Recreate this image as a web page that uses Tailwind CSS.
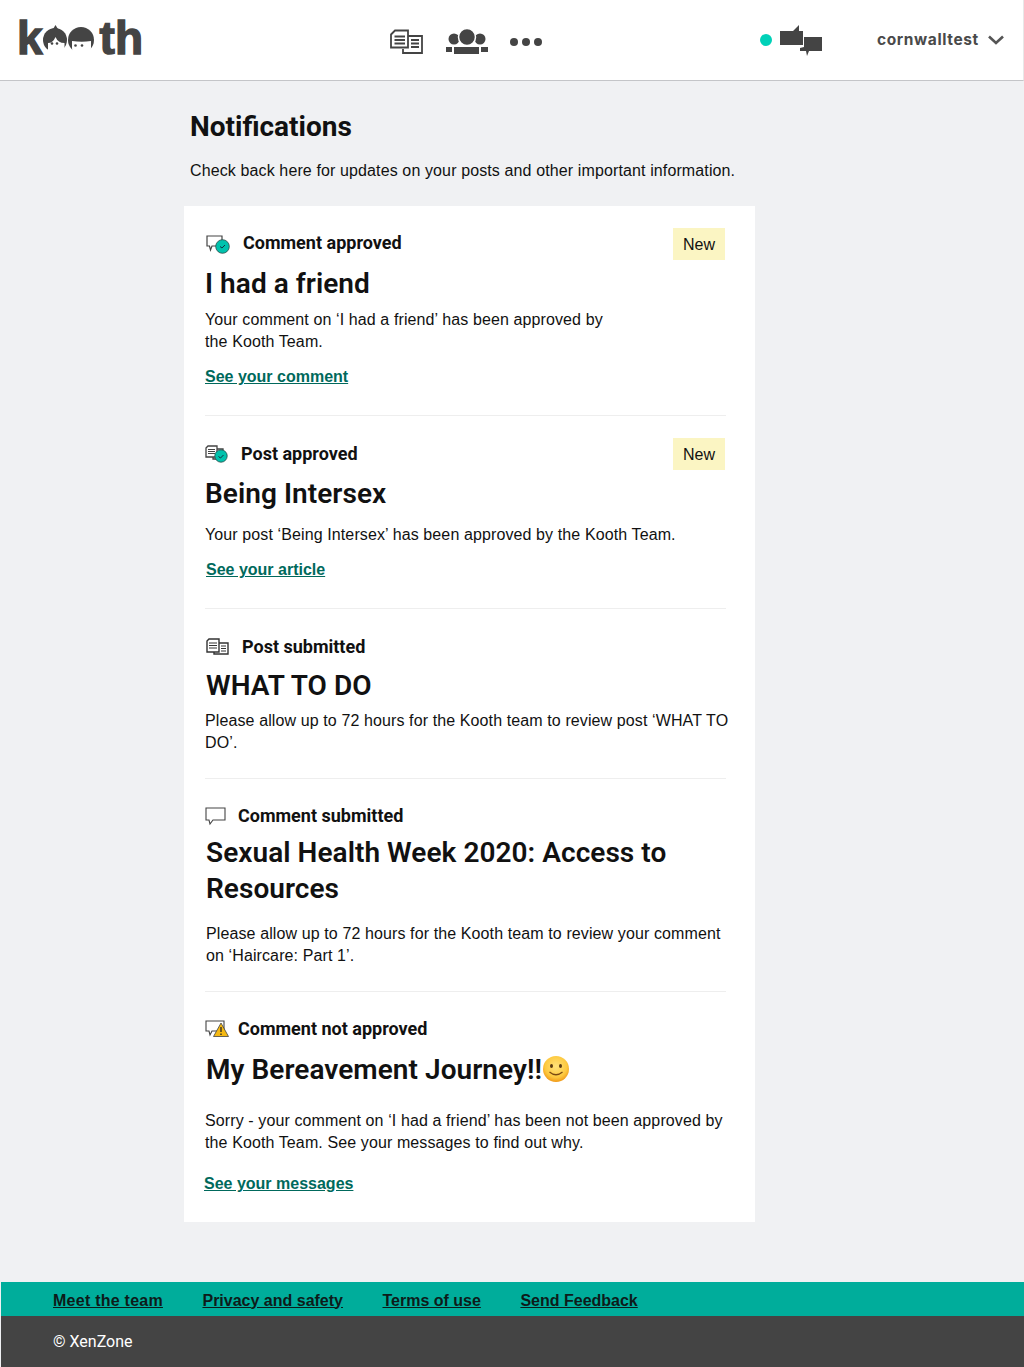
<!DOCTYPE html>
<html lang="en">
<head>
  <meta charset="UTF-8">
  <title>Kooth - Notifications</title>
  <script src="https://cdn.jsdelivr.net/npm/@tailwindcss/browser@4"></script>
</head>
<body class="bg-white font-['Liberation_Sans',sans-serif] text-[#111]">
<div class="min-h-[1367px] flex flex-col bg-[#f0f1f3]">

  <!-- Header -->
  <header class="relative h-[81px] bg-white border-b border-[#c4c5c8] border-r border-r-[#e8e8e8] flex items-center">
    <div class="ml-[17px] self-start mt-[15px] flex items-start font-bold text-[46px] leading-none text-[#444] [-webkit-text-stroke:1.400px_#444]">
      <span>k</span>
      <svg width="52" height="38" viewBox="0 0 52 38" class="shrink-0 ml-[0px] mt-[9px] mr-[5px]">
        <circle cx="12" cy="16" r="12" fill="#444"/>
        <path d="M5 28v-9q5 0 7.500-6q2.500 6 9 6v9z" fill="#fff"/>
        <path d="M12.500 1l3 5h-6z" fill="#444"/>
        <circle cx="9" cy="19.500" r="1.300" fill="#444"/><circle cx="14" cy="19.500" r="1.300" fill="#444"/>
        <circle cx="38" cy="16" r="13" fill="#444"/>
        <path d="M29 17q10 1.500 19 0v7q0 7-8 7h-2l-2.500 7-1.500-7q-5 0-5-7z" fill="#fff"/>
        <circle cx="32.500" cy="21.500" r="1.300" fill="#444"/><circle cx="39" cy="21.500" r="1.300" fill="#444"/>
      </svg>
      <span>th</span>
    </div>

    <!-- Nav icons -->
    <nav class="absolute left-[390px] top-[28px] flex items-center">
      <svg width="34" height="26" viewBox="0 0 34 26" class="text-[#444]">
        <path d="M1 5.500l4-4h13v17H1z M18 7h14v17H13v-4" fill="none" stroke="currentColor" stroke-width="1.800"/>
        <path d="M4.500 7.500h10.500M4.500 11h10.500M4.500 14.500h10.500M21 11h8M21 14.500h8M21 18h8" stroke="currentColor" stroke-width="2"/>
      </svg>
      <svg width="44" height="27" viewBox="0 0 44 27" class="ml-[21px] text-[#444]">
        <circle cx="9" cy="11" r="5.500" fill="currentColor"/>
        <circle cx="35" cy="11" r="5.500" fill="currentColor"/>
        <circle cx="22" cy="9" r="8.500" fill="currentColor" stroke="#fff" stroke-width="1.500"/>
        <path d="M1 19h6v5H1zM9 19h25v7H9zM36 19h7v5h-7z" fill="currentColor"/>
      </svg>
      <div class="ml-[21px] flex gap-[4px]">
        <span class="w-[8px] h-[8px] rounded-full bg-[#444]"></span>
        <span class="w-[8px] h-[8px] rounded-full bg-[#444]"></span>
        <span class="w-[8px] h-[8px] rounded-full bg-[#444]"></span>
      </div>
    </nav>

    <!-- Messages and user -->
    <div class="absolute left-[760px] top-[24px] flex items-center">
      <span class="w-[12px] h-[12px] rounded-full bg-[#00d1b8] mt-[-1px]"></span>
      <svg width="44" height="33" viewBox="0 0 44 33" class="ml-[8px]">
        <path d="M0 7h13l6-6v6h4v14H0zM24 13h18v14H29l-2 5-1-5h-6v-3l4-1z" fill="#444"/>
      </svg>
      <span class="ml-[53px] font-['Inter',sans-serif] font-bold text-[15.500px] tracking-[.6px] text-[#4a4a4a] mt-[-1px]">cornwalltest</span>
      <svg width="16" height="10" viewBox="0 0 16 10" class="ml-[9px] mt-[-2px]">
        <path d="M1 1.500L8 8l7-6.500" fill="none" stroke="#555" stroke-width="2.600"/>
      </svg>
    </div>
  </header>

  <!-- Content -->
  <main class="ml-[184px] w-[571px] flex-1">
    <h1 class="ml-[6px] mt-[28px] text-[28px] leading-[36px] font-bold font-['Roboto',sans-serif]">Notifications</h1>
    <p class="ml-[6px] mt-[15px] text-[16px] leading-[22px] tracking-[.12px]">Check back here for updates on your posts and other important information.</p>

    <section class="mt-[24px] bg-white text-[16px] leading-[22px] tracking-[.11px] px-[20px] pt-[22px] pb-[28px] h-[1016px]">

      <!-- Comment approved -->
      <article class="relative h-[188px] border-b border-[#eeeeee] ml-[1px] w-[521px]">
        <div class="flex items-center h-[30px]">
          <svg width="25" height="20" viewBox="0 0 25 20" class="ml-[1px] mt-[2px]">
            <path d="M1 2h15v10H6l-1.500 4-1-4H1z" fill="#fff" stroke="#444" stroke-width="1.200"/>
            <circle cx="16.500" cy="12.500" r="6.800" fill="#00c2ad" stroke="#2b4a48" stroke-width=".8"/>
            <path d="M14 12.500l2 1.500 3-3" fill="none" stroke="#134" stroke-width="1"/>
          </svg>
          <h3 class="ml-[12px] text-[18px] tracking-normal font-bold font-['Roboto',sans-serif]">Comment approved</h3>
        </div>
        <span class="absolute right-[1px] top-0 w-[52px] h-[32px] pt-[1px] bg-[#fbf5c3] flex items-center justify-center text-[16px] tracking-normal">New</span>
        <h2 class="mt-[8px] text-[28px] leading-[36px] tracking-[.05px] font-semibold font-['Roboto',sans-serif]">I had a friend</h2>
        <p class="mt-[7px] w-[410px]">Your comment on ‘I had a friend’ has been approved by the Kooth Team.</p>
        <a class="block mt-[13px] font-bold tracking-normal text-[#00695c] underline">See your comment</a>
      </article>

      <!-- Post approved -->
      <article class="relative h-[193px] border-b border-[#eeeeee] ml-[1px] w-[521px] pt-[23px]">
        <div class="flex items-center h-[30px]">
          <svg width="24" height="18" viewBox="0 0 24 18">
            <path d="M1 3l2-2h9v11H1zM12 4h6v10H8v-2" fill="none" stroke="#444" stroke-width="1.300"/>
            <path d="M3 4.500h7M3 6.500h7M3 8.500h7" stroke="#444"/>
            <circle cx="16" cy="11" r="6.200" fill="#00c2ad" stroke="#2b4a48" stroke-width=".8"/>
            <path d="M13.500 11.500l2 1.500 3-3" fill="none" stroke="#134" stroke-width="1"/>
          </svg>
          <h3 class="ml-[12px] text-[18px] tracking-normal font-bold font-['Roboto',sans-serif]">Post approved</h3>
        </div>
        <span class="absolute right-[1px] top-[22px] w-[52px] h-[32px] pt-[1px] bg-[#fbf5c3] flex items-center justify-center text-[16px] tracking-normal">New</span>
        <h2 class="mt-[7px] text-[28px] leading-[36px] tracking-[.05px] font-semibold font-['Roboto',sans-serif]">Being Intersex</h2>
        <p class="mt-[12px]">Your post ‘Being Intersex’ has been approved by the Kooth Team.</p>
        <a class="block mt-[13px] ml-[1px] font-bold tracking-normal text-[#00695c] underline">See your article</a>
      </article>

      <!-- Post submitted -->
      <article class="h-[170px] border-b border-[#eeeeee] ml-[1px] w-[521px] pt-[23px]">
        <div class="flex items-center h-[30px]">
          <svg width="24" height="18" viewBox="0 0 24 18" class="ml-[1px]">
            <path d="M1 3l2-2h10v13H1zM13 5h9v11H8v-2" fill="none" stroke="#333" stroke-width="1.400"/>
            <path d="M3 5h8M3 7.500h8M3 10h8M15 8h5M15 10.500h5M15 13h5" stroke="#333"/>
          </svg>
          <h3 class="ml-[12px] text-[18px] tracking-normal font-bold font-['Roboto',sans-serif]">Post submitted</h3>
        </div>
        <h2 class="mt-[6px] ml-[1px] text-[28px] leading-[36px] tracking-[.05px] font-semibold font-['Roboto',sans-serif]">WHAT TO DO</h2>
        <p class="mt-[6px] w-[530px]">Please allow up to 72 hours for the Kooth team to review post ‘WHAT TO DO’.</p>
      </article>

      <!-- Comment submitted -->
      <article class="h-[213px] border-b border-[#eeeeee] ml-[1px] w-[521px] pt-[22px]">
        <div class="flex items-center h-[30px]">
          <svg width="22" height="20" viewBox="0 0 22 20">
            <path d="M1 2h19v12H8l-3 4-1-4H1z" fill="#fff" stroke="#444" stroke-width="1.100"/>
          </svg>
          <h3 class="ml-[11px] text-[18px] tracking-normal font-bold font-['Roboto',sans-serif]">Comment submitted</h3>
        </div>
        <h2 class="mt-[4px] ml-[1px] text-[28px] leading-[36px] tracking-[.05px] font-semibold font-['Roboto',sans-serif]">Sexual Health Week 2020: Access to Resources</h2>
        <p class="mt-[16px] ml-[1px]">Please allow up to 72 hours for the Kooth team to review your comment on ‘Haircare: Part 1’.</p>
      </article>

      <!-- Comment not approved -->
      <article class="ml-[1px] w-[521px] pt-[22px]">
        <div class="flex items-center h-[30px]">
          <svg width="24" height="20" viewBox="0 0 24 20">
            <path d="M1 2h18v10H7l-2 4-1-4H1z" fill="#fff" stroke="#444" stroke-width="1.100"/>
            <path d="M16 4l7.500 13.500H8.500z" fill="#f5b912" stroke="#444" stroke-width=".8"/>
            <path d="M16 8v5M16 14.500v1.500" stroke="#222" stroke-width="1.300"/>
          </svg>
          <h3 class="ml-[9px] text-[18px] tracking-normal font-bold font-['Roboto',sans-serif]">Comment not approved</h3>
        </div>
        <h2 class="mt-[8px] ml-[1px] text-[28px] leading-[36px] tracking-[.05px] font-semibold font-['Roboto',sans-serif] flex items-center">My Bereavement Journey!!
          <svg width="28" height="28" viewBox="0 0 28 28" class="ml-[0px] mt-[-2px]">
            <defs>
              <radialGradient id="smile" cx="50%" cy="40%" r="60%">
                <stop offset="0%" stop-color="#ffe27a"/>
                <stop offset="70%" stop-color="#fdc93f"/>
                <stop offset="100%" stop-color="#f09a1a"/>
              </radialGradient>
            </defs>
            <circle cx="14" cy="14" r="13" fill="url(#smile)"/>
            <ellipse cx="9.500" cy="11" rx="1.500" ry="2" fill="#5b3a12"/>
            <ellipse cx="18.500" cy="11" rx="1.500" ry="2" fill="#5b3a12"/>
            <path d="M7.500 17q6.500 5.500 13 0" fill="none" stroke="#7a4a12" stroke-width="1.300"/>
          </svg>
        </h2>
        <p class="mt-[22px]">Sorry - your comment on ‘I had a friend’ has been not been approved by the Kooth Team. See your messages to find out why.</p>
        <a class="block mt-[19px] ml-[-1px] font-bold tracking-normal text-[#00695c] underline">See your messages</a>
      </article>
    </section>
  </main>

  <!-- Footer -->
  <footer class="ml-[1px]">
    <div class="h-[34px] bg-[#00ad9b] flex items-center pl-[52px] pt-[3px] gap-[39.500px] text-[16px] font-bold text-[#0d1b1a]">
      <a class="underline tracking-[.25px]">Meet the team</a>
      <a class="underline">Privacy and safety</a>
      <a class="underline">Terms of use</a>
      <a class="underline">Send Feedback</a>
    </div>
    <div class="h-[51px] bg-[#444] flex items-center pl-[52px] text-[16px] text-white font-['Roboto',sans-serif]">© XenZone</div>
  </footer>
</div>
</body>
</html>
